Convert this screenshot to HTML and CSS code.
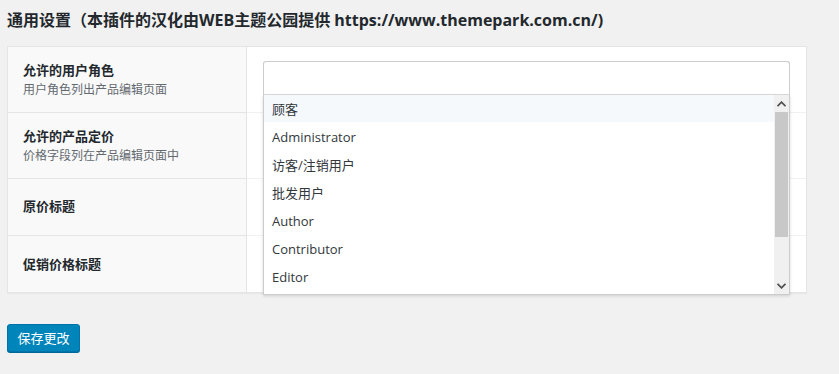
FILE: index.html
```html
<!DOCTYPE html>
<html lang="zh-CN">
<head>
<meta charset="utf-8">
<link rel="stylesheet" href="styles.css">
</head>
<body>
<div class="wrap">
  <h2 class="title">通用设置（本插件的汉化由WEB主题公园提供 https://www.themepark.com.cn/)</h2>
  <div class="table">
    <div class="row r1">
      <div class="th"><div class="label">允许的用户角色</div><div class="desc">用户角色列出产品编辑页面</div></div>
      <div class="td">
        <div class="select">
          <div class="select-box"></div>
          <div class="dropdown">
            <ul class="options">
              <li class="opt hl">顾客</li>
              <li class="opt">Administrator</li>
              <li class="opt">访客/注销用户</li>
              <li class="opt">批发用户</li>
              <li class="opt">Author</li>
              <li class="opt">Contributor</li>
              <li class="opt">Editor</li>
            </ul>
            <div class="scrollbar">
              <div class="sb-btn"><svg width="9" height="6" viewBox="0 0 9 6"><path d="M0.5 5.2 L4.5 1.2 L8.5 5.2" fill="none" stroke="#505050" stroke-width="1.8"/></svg></div>
              <div class="sb-thumb"></div>
              <div class="sb-track"></div>
              <div class="sb-btn down"><svg width="9" height="6" viewBox="0 0 9 6"><path d="M0.5 0.8 L4.5 4.8 L8.5 0.8" fill="none" stroke="#505050" stroke-width="1.8"/></svg></div>
            </div>
          </div>
        </div>
      </div>
    </div>
    <div class="row r2">
      <div class="th"><div class="label">允许的产品定价</div><div class="desc">价格字段列在产品编辑页面中</div></div>
      <div class="td"></div>
    </div>
    <div class="row r3">
      <div class="th"><div class="label">原价标题</div></div>
      <div class="td"></div>
    </div>
    <div class="row r4">
      <div class="th"><div class="label">促销价格标题</div></div>
      <div class="td"></div>
    </div>
  </div>
  <button class="btn">保存更改</button>
</div>
</body>
</html>
```

FILE: styles.css
```css
* { box-sizing: border-box; }
html, body { margin: 0; padding: 0; }
body {
  background: #f1f1f1;
  font-family: "Open Sans", "Noto Sans CJK SC", sans-serif;
  color: #23282d;
  width: 839px;
  height: 374px;
  overflow: hidden;
}
.wrap { padding: 0 32px 0 7px; }
.title {
  margin: 0;
  padding-top: 9px;
  height: 46px;
  font-size: 16px;
  line-height: 22px;
  font-weight: 700;
  color: #23282d;
}
.table {
  width: 800px;
  border: 1px solid #e5e5e5;
  background: #fff;
  box-shadow: 0 1px 1px rgba(0,0,0,0.04);
}
.row { display: grid; grid-template-columns: 239px 1fr; }
.r1, .r2 { height: 66px; }
.r3 { height: 57px; }
.r4 { height: 56px; }
.th {
  background: #f9f9f9;
  border-right: 1px solid #e5e5e5;
  border-bottom: 1px solid #e5e5e5;
  padding: 0 15px;
  display: flex;
  flex-direction: column;
  justify-content: center;
}
.r3 .th { padding-bottom: 2px; }
.r4 .th, .r4 .td { border-bottom: 0; }
.td { border-bottom: 1px solid #f1f1f1; padding: 14px 16px 0 16px; }
.label { font-size: 13px; line-height: 20px; font-weight: 700; color: #23282d; }
.desc { font-size: 12px; line-height: 20px; color: #646970; }
.select { position: relative; }
.select-box {
  height: 34px;
  border: 1px solid #ccc;
  border-bottom-color: #ddd;
  border-radius: 3px 3px 0 0;
  background: #fff;
}
.dropdown {
  position: absolute;
  left: 0;
  right: 0;
  top: 34px;
  height: 200px;
  background: #fff;
  border: 1px solid #ccc;
  border-top: 0;
  box-shadow: 0 1px 3px rgba(0,0,0,0.15);
  display: flex;
  z-index: 5;
}
.options { list-style: none; margin: 0; padding: 0; flex: 1; overflow: hidden; }
.opt {
  height: 28px;
  line-height: 30px;
  padding-left: 8px;
  font-size: 13px;
  color: #32373c;
}
.opt.hl { background: #f5f9fc; height: 27px; line-height: 28px; }
.scrollbar {
  width: 15px;
  display: flex;
  flex-direction: column;
  background: #f0f0f0;
}
.sb-btn { height: 17px; display: flex; align-items: center; justify-content: center; background: #f0f0f0; }
.sb-thumb { height: 125px; background: #c8c8c8; margin: 0 1px; }
.sb-track { flex: 1; }
.btn {
  margin-top: 31px;
  width: 73px;
  height: 28px;
  background: #0085ba;
  border: 1px solid #0073aa;
  border-radius: 3px;
  box-shadow: 0 1px 0 #006799;
  color: #fff;
  font-family: "Open Sans", "Noto Sans CJK SC", sans-serif;
  font-size: 13px;
  line-height: 26px;
  padding: 0;
}
```
